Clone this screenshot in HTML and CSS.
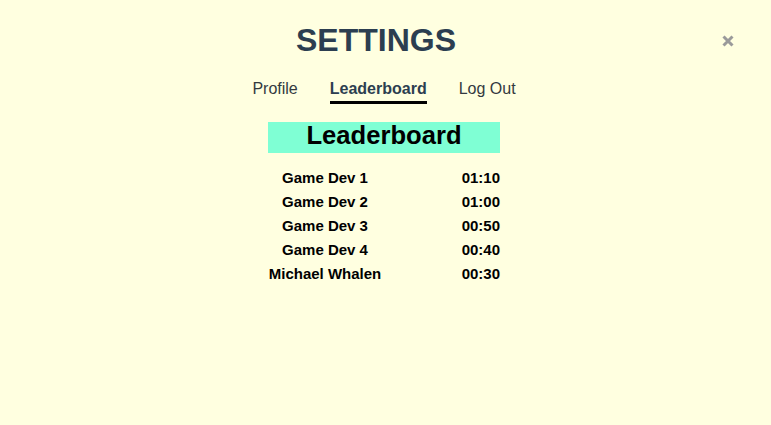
FILE: index.html
```html
<!DOCTYPE html>
<html lang="en">
<head>
<meta charset="utf-8">
<title>Settings</title>
<link rel="stylesheet" href="styles.css">
</head>
<body>
<div class="modal">
  <header class="header">
    <h1 class="title">SETTINGS</h1>
    <button class="close" aria-label="Close">
      <svg width="12" height="12" viewBox="0 0 12 12"><path d="M1.5 1.5 L10.5 10.5 M10.5 1.5 L1.5 10.5" stroke="#9a9a9a" stroke-width="3" stroke-linecap="butt"/></svg>
    </button>
  </header>
  <nav class="tabs">
    <a class="tab">Profile</a>
    <a class="tab active">Leaderboard</a>
    <a class="tab">Log Out</a>
  </nav>
  <section class="board">
    <h2 class="board-title">Leaderboard</h2>
    <div class="rows">
      <div class="row"><span class="name">Game Dev 1</span><span class="time">01:10</span></div>
      <div class="row"><span class="name">Game Dev 2</span><span class="time">01:00</span></div>
      <div class="row"><span class="name">Game Dev 3</span><span class="time">00:50</span></div>
      <div class="row"><span class="name">Game Dev 4</span><span class="time">00:40</span></div>
      <div class="row"><span class="name">Michael Whalen</span><span class="time">00:30</span></div>
    </div>
  </section>
</div>
</body>
</html>
```

FILE: styles.css
```css
html, body {
  margin: 0;
  padding: 0;
  background: #ffffe0;
  font-family: "Liberation Sans", Arial, sans-serif;
}
.modal {
  position: relative;
  width: 771px;
  height: 425px;
  display: flex;
  flex-direction: column;
  align-items: center;
  padding-right: 3px;
  box-sizing: border-box;
}
.header {
  align-self: stretch;
  padding-top: 22px;
  padding-right: 16px;
}
.title {
  margin: 0;
  text-align: center;
  font-size: 32px;
  line-height: 37px;
  font-weight: bold;
  color: #2c3e50;
}
.close {
  position: absolute;
  top: 35px;
  left: 722px;
  width: 12px;
  height: 12px;
  padding: 0;
  border: 0;
  background: none;
  display: flex;
}
.tabs {
  display: flex;
  gap: 32px;
  margin-top: 21px;
}
.tab {
  font-size: 16px;
  line-height: 18px;
  color: #333a40;
  padding-bottom: 3px;
  border-bottom: 3px solid transparent;
}
.tab.active {
  font-weight: bold;
  color: #2c3e50;
  border-bottom-color: #000;
}
.board {
  width: 232px;
  margin-top: 18px;
}
.board-title {
  margin: 0;
  background: #7fffd4;
  color: #000;
  text-align: center;
  font-size: 25.6px;
  line-height: 26px;
  padding-bottom: 5px;
  font-weight: bold;
}
.rows {
  margin-top: 13px;
}
.row {
  display: grid;
  grid-template-columns: 114px 1fr;
  font-size: 15px;
  line-height: 24px;
  font-weight: bold;
  color: #000;
}
.name {
  text-align: center;
}
.time {
  text-align: right;
}
```
